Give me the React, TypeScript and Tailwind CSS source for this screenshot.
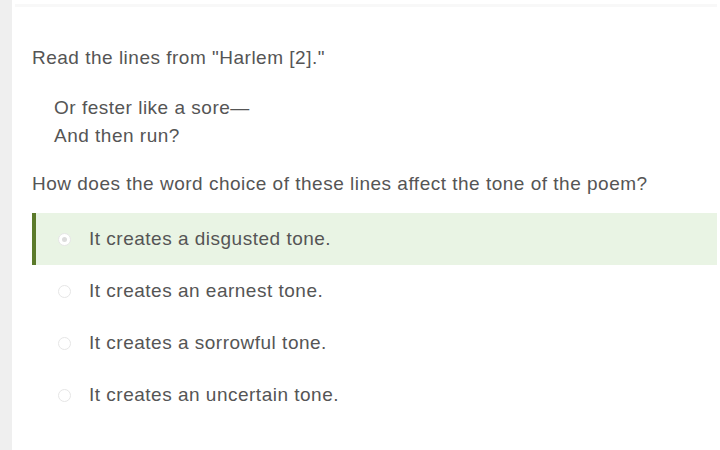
import React from 'react';

const options = [
  'It creates a disgusted tone.',
  'It creates an earnest tone.',
  'It creates a sorrowful tone.',
  'It creates an uncertain tone.',
];

export default function App() {
  const selected = 0;

  return (
    <div className="flex h-[450px] w-[720px] bg-white text-[19px] tracking-[0.5px] text-[#555555] font-['Liberation_Sans',Arial,sans-serif]">
      {/* left gutter */}
      <div className="w-[12px] bg-[#efefef]" />

      <div className="flex flex-1 flex-col">
        <div className="mx-[3px] mt-[4px] h-[3px] bg-[#f8f8f8]" />

        <div className="flex flex-col pl-[20px] pr-[3px] pt-[37px]">
          <p className="leading-[28px]">Read the lines from "Harlem [2]."</p>

          <div className="mt-[22px] pl-[22px] leading-[28px]">
            <p>Or fester like a sore—</p>
            <p>And then run?</p>
          </div>

          <p className="mt-[20px] leading-[28px]">
            How does the word choice of these lines affect the tone of the poem?
          </p>

          <div className="mt-[15px] flex flex-col">
            {options.map((opt, i) => {
              const active = i === selected;
              return (
                <div
                  key={opt}
                  className={
                    active
                      ? 'flex h-[52px] items-center border-l-4 border-[#5b7a2a] bg-[#e9f4e4] pl-[22px]'
                      : 'flex h-[52px] items-center border-l-4 border-transparent pl-[22px]'
                  }
                >
                  <span className="flex h-[13px] w-[13px] items-center justify-center rounded-full border border-[#e6e6e6] bg-white">
                    {active && <span className="h-[5px] w-[5px] rounded-full bg-[#dcdcdc]" />}
                  </span>
                  <span className="ml-[18px]">{opt}</span>
                </div>
              );
            })}
          </div>
        </div>
      </div>
    </div>
  );
}
